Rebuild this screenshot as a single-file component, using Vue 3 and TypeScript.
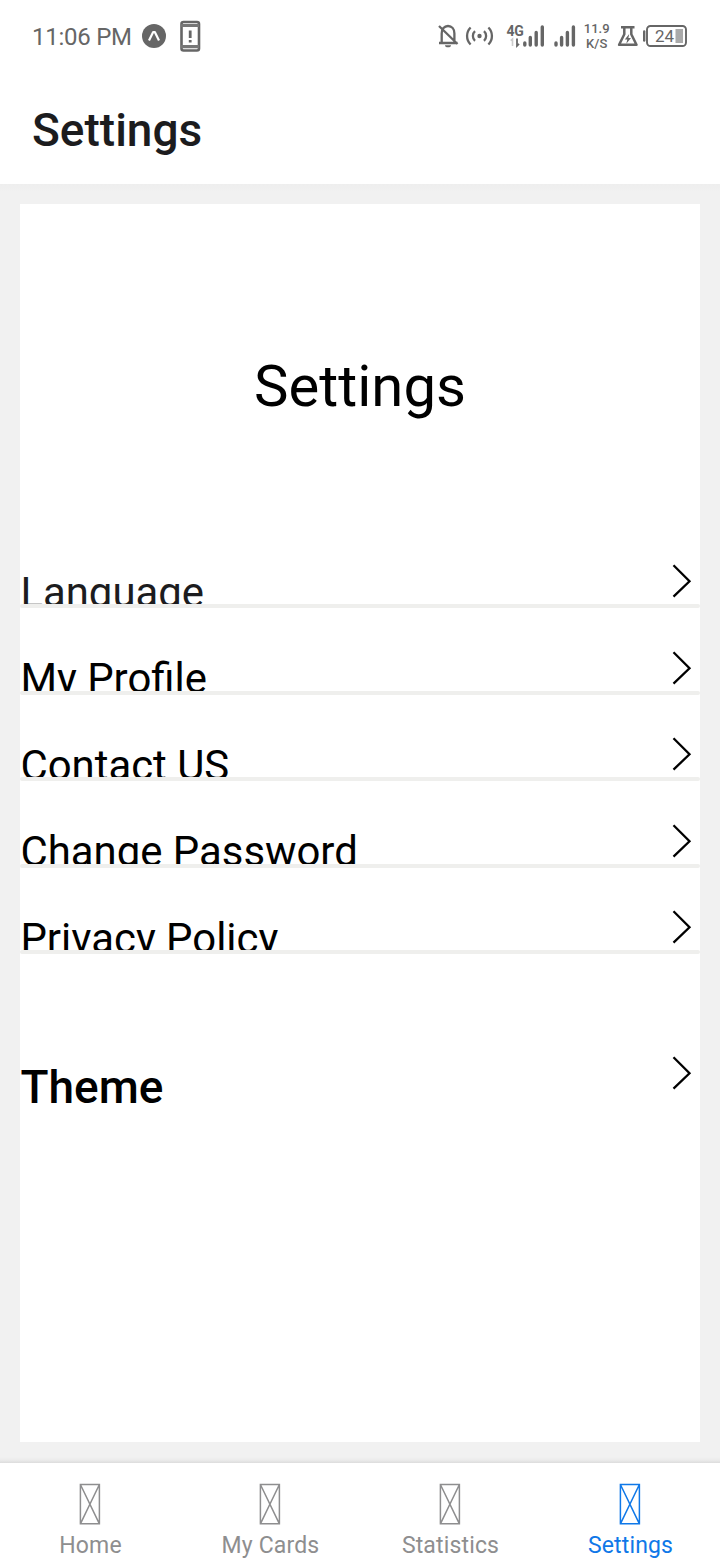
<script setup lang="ts">
interface Row {
  label: string
  soft?: boolean
}

const rows: Row[] = [
  { label: 'Language', soft: true },
  { label: 'My Profile' },
  { label: 'Contact US' },
  { label: 'Change Password' },
  { label: 'Privacy Policy' },
]

const tabs: string[] = ['Home', 'My Cards', 'Statistics', 'Settings']
const activeTab = 'Settings'
</script>

<template>
  <div class="screen">
    <div class="status">
      <span class="time">11:06 PM</span>
      <svg class="status-icons-left" width="62" height="36" viewBox="140 18 62 36" fill="none">
        <circle cx="154" cy="36" r="12" fill="#666" />
        <path d="M149 40.5 153.2 32h1.6l4.2 8.5" stroke="#fff" stroke-width="2.2" stroke-linejoin="round" />
        <rect x="181.5" y="22" width="17.5" height="28.5" rx="2" stroke="#666" stroke-width="2.6" />
        <path d="M181 25.5h18M181 46.7h18" stroke="#777" stroke-width="3.2" />
        <path d="M190.2 30.5v7.5M190.2 40v2.6" stroke="#666" stroke-width="2.8" />
      </svg>
      <svg class="status-icons-right" width="256" height="36" viewBox="434 18 256 36" fill="none" stroke="#666">
        <path d="M439 43h18.5M441.7 42V33.5c0-4.4 2.6-7.5 6.3-7.5s6.4 3.1 6.4 7.5V42M439 26l18.5 18" stroke-width="2.3" />
        <path d="M445 45.2h6a3 2 0 0 1-6 0z" fill="#666" stroke="none" />
        <circle cx="479.5" cy="36" r="2.2" fill="#666" stroke="none" />
        <path d="M475 31.2a6.5 6.5 0 0 0 0 9.6M484 31.2a6.5 6.5 0 0 1 0 9.6M470.6 27.5a12 12 0 0 0 0 17M488.4 27.5a12 12 0 0 1 0 17" stroke-width="2.3" />
        <text class="net" x="506.5" y="36">4G</text>
        <path d="M512.5 46v-7l-1.8 1.6" stroke="#ccc" stroke-width="1.6" />
        <path d="M517 38.5v7.3l2-2" stroke-width="1.8" />
        <path d="M524.8 43v2M530.3 37.5V45M536.2 32.5V45M542.3 27V45" stroke-width="3.4" stroke-linecap="round" />
        <path d="M556 43v2M561.6 37.5V45M567.4 32.5V45M573.4 27V45" stroke-width="3.4" stroke-linecap="round" />
        <text class="speed" x="596.7" y="33" text-anchor="middle">11.9</text>
        <text class="speed" x="596.7" y="48" text-anchor="middle">K/S</text>
        <path d="M621 27.2h13.5M624.3 27v7.2l-5.2 10.6h17.4l-5.2-10.6V27" stroke-width="2.5" stroke-linejoin="round" />
        <path d="m629.2 34-4.4 5.6h2.5l-1 4.2 4.7-5.8h-2.6z" fill="#666" stroke="none" />
        <path d="M644.2 31.5v9" stroke-width="2.4" stroke-linecap="round" />
        <rect x="647" y="26" width="39" height="20" rx="3.5" stroke-width="1.9" />
        <rect x="675.5" y="29" width="7.5" height="14" fill="#aaa" stroke="none" />
        <text class="battery" x="655" y="42.2">24</text>
      </svg>
    </div>

    <header class="bar">Settings</header>

    <main class="body">
      <section class="card">
        <h1 class="hero">Settings</h1>
        <div v-for="row in rows" :key="row.label" class="row">
          <div class="row-content">
            <span class="label" :class="{ soft: row.soft }">{{ row.label }}</span>
            <svg class="chevron" width="20" height="36" viewBox="0 0 20 36">
              <path d="M1.5 2.3 17.5 18.3 1.5 33.6" />
            </svg>
          </div>
          <div class="divider"></div>
        </div>
        <div class="theme">
          <span class="theme-label">Theme</span>
          <svg class="chevron" width="20" height="36" viewBox="0 0 20 36">
            <path d="M1.5 2.3 17.5 18.3 1.5 33.6" />
          </svg>
        </div>
      </section>
    </main>

    <nav class="tabs">
      <div v-for="tab in tabs" :key="tab" class="tab" :class="{ active: tab === activeTab }">
        <svg class="glyph" width="22" height="42" viewBox="0 0 22 42">
          <path d="M1.4 1.5h19v39.3h-19zL20.4 40.8M20.4 1.5 1.4 40.8" />
        </svg>
        <span class="tab-label">{{ tab }}</span>
      </div>
    </nav>
  </div>
</template>

<style>
body {
  margin: 0;
  background: #fff;
}
</style>

<style scoped>
.screen {
  display: flex;
  flex-direction: column;
  width: 720px;
  height: 1560px;
  overflow: hidden;
  background: #fff;
  font-family: Roboto, sans-serif;
  color: #000;
}
.status {
  display: flex;
  box-sizing: border-box;
  height: 76px;
  flex: none;
  padding: 18px 30px 0 32px;
  color: #666;
}
.time {
  width: 108px;
  font-size: 24px;
  letter-spacing: -0.25px;
  line-height: 39px;
  white-space: nowrap;
}
.status-icons-right {
  margin-left: auto;
}
.status text {
  fill: #666;
  stroke: none;
}
.net {
  font-size: 14px;
  font-weight: 700;
  letter-spacing: -0.2px;
}
.speed {
  font-size: 13px;
  font-weight: 500;
}
.battery {
  font-size: 17px;
}
.bar {
  flex: none;
  box-sizing: border-box;
  height: 108px;
  padding-left: 32px;
  font-size: 46px;
  font-weight: 500;
  line-height: 108px;
  color: #1c1c1e;
}
.body {
  flex: none;
  box-sizing: border-box;
  height: 1279px;
  padding: 20px;
  background: linear-gradient(#eeeeee, #f1f1f1 8px, #f1f1f1 1273px, #ebebeb 1276px, #dcdcdc);
}
.card {
  height: 1238px;
  background: #fff;
}
.hero {
  height: 317.5px;
  margin: 0;
  font-size: 58px;
  font-weight: 400;
  line-height: 364px;
  text-align: center;
}
.row-content {
  display: flex;
  justify-content: space-between;
  height: 82.5px;
  overflow: hidden;
}
.divider {
  height: 4px;
  border-radius: 2px;
  background: #efefed;
}
.label {
  padding: 45px 0 0 0.4px;
  font-size: 41.9px;
  line-height: 52px;
  white-space: nowrap;
}
.soft {
  color: #1c1c1e;
}
.chevron {
  flex: none;
  margin: 41.5px 8px 0 0;
  fill: none;
  stroke: #000;
  stroke-width: 2.3;
}
.theme {
  display: flex;
  justify-content: space-between;
  padding-top: 101px;
}
.theme-label {
  padding-left: 0.5px;
  font-size: 46px;
  font-weight: 500;
  line-height: 64px;
}
.theme .chevron {
  margin-top: 0;
}
.tabs {
  flex: none;
  display: grid;
  grid-template-columns: repeat(4, 1fr);
  height: 97px;
  background: #fff;
}
.tab {
  display: flex;
  flex-direction: column;
  align-items: center;
  padding-top: 20px;
  color: #8e8e8f;
}
.active {
  color: #0f78e8;
}
.glyph {
  fill: none;
  stroke: currentColor;
  stroke-width: 1.5;
}
.tab-label {
  margin-top: 6px;
  padding-left: 1px;
  font-size: 23px;
  letter-spacing: 0.15px;
  line-height: 29px;
}
</style>
